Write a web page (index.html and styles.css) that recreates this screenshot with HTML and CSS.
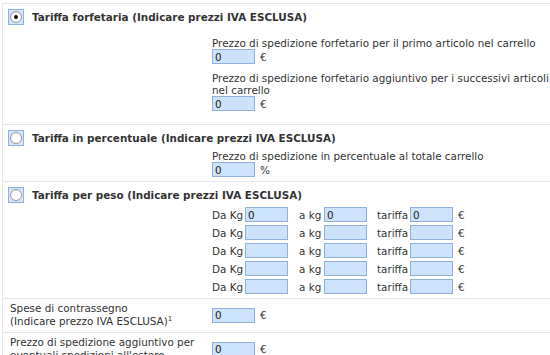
FILE: index.html
```html
<!DOCTYPE html>
<html lang="it">
<head>
    <meta charset="UTF-8">
    <title>Spese di spedizione</title>
    <link rel="stylesheet" href="styles.css">
</head>
<body>

<div class="shipping">
    <!-- Tariffa forfetaria -->
    <div class="section section-flat">
        <div class="section-head">
            <span class="radio-box"><input type="radio" name="tariffa" value="flat" checked></span>
            <span class="section-title">Tariffa forfetaria (Indicare prezzi IVA ESCLUSA)</span>
        </div>
        <div class="section-body">
            <div class="field">
                <div class="field-label">Prezzo di spedizione forfetario per il primo articolo nel carrello</div>
                <div class="field-input"><input type="text" class="price" value="0"> <span class="unit">€</span></div>
            </div>
            <div class="field">
                <div class="field-label">Prezzo di spedizione forfetario aggiuntivo per i successivi articoli nel carrello</div>
                <div class="field-input"><input type="text" class="price" value="0"> <span class="unit">€</span></div>
            </div>
        </div>
    </div>

    <!-- Tariffa in percentuale -->
    <div class="section section-percent">
        <div class="section-head">
            <span class="radio-box"><input type="radio" name="tariffa" value="percent"></span>
            <span class="section-title">Tariffa in percentuale (Indicare prezzi IVA ESCLUSA)</span>
        </div>
        <div class="section-body">
            <div class="field">
                <div class="field-label">Prezzo di spedizione in percentuale al totale carrello</div>
                <div class="field-input"><input type="text" class="price" value="0"> <span class="unit">%</span></div>
            </div>
        </div>
    </div>

    <!-- Tariffa per peso -->
    <div class="section section-weight">
        <div class="section-head">
            <span class="radio-box"><input type="radio" name="tariffa" value="weight"></span>
            <span class="section-title">Tariffa per peso (Indicare prezzi IVA ESCLUSA)</span>
        </div>
        <div class="section-body">
            <div class="weight-row">
                <span class="w-from">Da Kg</span><input type="text" class="price" value="0">
                <span class="w-to">a kg</span><input type="text" class="price" value="0">
                <span class="w-rate">tariffa</span><input type="text" class="price" value="0">
                <span class="unit">€</span>
            </div>
            <div class="weight-row">
                <span class="w-from">Da Kg</span><input type="text" class="price">
                <span class="w-to">a kg</span><input type="text" class="price">
                <span class="w-rate">tariffa</span><input type="text" class="price">
                <span class="unit">€</span>
            </div>
            <div class="weight-row">
                <span class="w-from">Da Kg</span><input type="text" class="price">
                <span class="w-to">a kg</span><input type="text" class="price">
                <span class="w-rate">tariffa</span><input type="text" class="price">
                <span class="unit">€</span>
            </div>
            <div class="weight-row">
                <span class="w-from">Da Kg</span><input type="text" class="price">
                <span class="w-to">a kg</span><input type="text" class="price">
                <span class="w-rate">tariffa</span><input type="text" class="price">
                <span class="unit">€</span>
            </div>
            <div class="weight-row">
                <span class="w-from">Da Kg</span><input type="text" class="price">
                <span class="w-to">a kg</span><input type="text" class="price">
                <span class="w-rate">tariffa</span><input type="text" class="price">
                <span class="unit">€</span>
            </div>
        </div>
    </div>

    <!-- Contrassegno -->
    <div class="line-row">
        <div class="line-label">Spese di contrassegno<br>(Indicare prezzo IVA ESCLUSA)<sup>1</sup></div>
        <div class="field-input"><input type="text" class="price" value="0"> <span class="unit">€</span></div>
    </div>

    <!-- Estero -->
    <div class="line-row">
        <div class="line-label">Prezzo di spedizione aggiuntivo per<br>eventuali spedizioni all'estero</div>
        <div class="field-input"><input type="text" class="price" value="0"> <span class="unit">€</span></div>
    </div>
</div>

</body>
</html>
```

FILE: styles.css
```css
body {
    margin: 0;
    font-family: "DejaVu Sans", Verdana, sans-serif;
    font-size: 10.4px;
    color: #333;
    background: #fff;
}
.shipping {
    margin: 3px 0 0 2px;
    border-left: 1px solid #e6e6e6;
}
.section {
    border-top: 1px solid #e6e6e6;
}
.section-head {
    display: flex;
    align-items: center;
    padding: 5px 0 0 5px;
    height: 16px;
}
.radio-box {
    width: 14px;
    height: 14px;
    border: 1px solid #8fb1da;
    background: #d3e5fa;
    display: flex;
    align-items: center;
    justify-content: center;
}
.radio-box input[type="radio"] {
    appearance: none;
    margin: 0;
    width: 12px;
    height: 12px;
    border-radius: 50%;
    border: 1px solid #9a9a9a;
    background: radial-gradient(circle at 60% 60%, #fff 45%, #e4e4e4 100%);
    box-sizing: border-box;
    position: relative;
}
.radio-box input[type="radio"]:checked::after {
    content: "";
    position: absolute;
    left: 3px;
    top: 3px;
    width: 4px;
    height: 4px;
    border-radius: 50%;
    background: #111;
}
.section-title {
    font-weight: bold;
    margin-left: 8px;
    line-height: 14px;
}
.section-body {
    padding-left: 209px;
}
.section-flat .section-body {
    padding-top: 12px;
    padding-bottom: 13px;
}
.section-percent .section-body {
    padding-top: 4px;
    padding-bottom: 4px;
}
.section-weight .section-body {
    padding-top: 4px;
    padding-bottom: 4px;
}
.field + .field {
    margin-top: 8px;
}
.field-label {
    line-height: 12px;
}
.field-input {
    display: flex;
    align-items: center;
}
.price {
    width: 43px;
    height: 15px;
    box-sizing: border-box;
    margin: 0;
    padding: 0 2px;
    border: 1px solid #8fb1da;
    background: #cde2fb;
    font-family: "DejaVu Sans", Verdana, sans-serif;
    font-size: 10.4px;
    color: #222;
    outline: none;
}
.unit {
    margin-left: 5px;
}
.weight-row {
    display: flex;
    align-items: center;
    height: 15px;
}
.weight-row + .weight-row {
    margin-top: 3px;
}
.w-from {
    width: 33px;
}
.w-to {
    width: 25px;
    margin-left: 11px;
}
.w-rate {
    width: 33px;
    margin-left: 10px;
}
.line-row {
    display: flex;
    align-items: center;
    border-top: 1px solid #e6e6e6;
    padding: 3px 0 4px;
}
.line-label {
    width: 202px;
    padding-left: 7px;
    line-height: 13px;
}
sup {
    font-size: 7px;
    vertical-align: 4px;
    line-height: 0;
}
```
